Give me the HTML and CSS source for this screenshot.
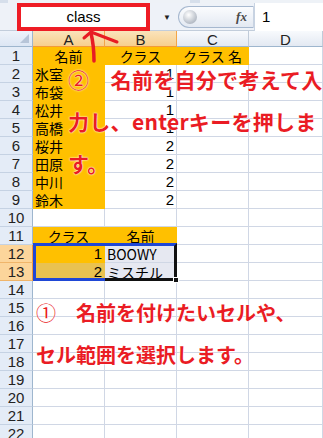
FILE: index.html
```html
<!DOCTYPE html>
<html lang="ja">
<head>
    <meta charset="UTF-8">
    <title>名前の定義</title>
    <link rel="stylesheet" href="styles.css">
</head>
<body>
    <div class="window">
        <div class="ribbon-edge"></div>

        <div class="formula-bar">
            <div class="name-box">class</div>
            <span class="drop">&#9660;</span>
            <div class="fx-pill"><span class="knob"></span><span class="fx">fx</span></div>
            <div class="formula">1</div>
        </div>

        <div class="sheet">
            <div class="corner"></div>
            <div class="col-head on">A</div>
            <div class="col-head on">B</div>
            <div class="col-head">C</div>
            <div class="col-head">D</div>

            <div class="row-head">1</div>
            <div class="cell fill center">名前</div>
            <div class="cell fill center">クラス</div>
            <div class="cell fill center">クラス 名</div>
            <div class="cell"></div>

            <div class="row-head">2</div>
            <div class="cell fill">氷室</div>
            <div class="cell num">1</div>
            <div class="cell"></div>
            <div class="cell"></div>

            <div class="row-head">3</div>
            <div class="cell fill">布袋</div>
            <div class="cell num">1</div>
            <div class="cell"></div>
            <div class="cell"></div>

            <div class="row-head">4</div>
            <div class="cell fill">松井</div>
            <div class="cell num">1</div>
            <div class="cell"></div>
            <div class="cell"></div>

            <div class="row-head">5</div>
            <div class="cell fill">高橋</div>
            <div class="cell num">1</div>
            <div class="cell"></div>
            <div class="cell"></div>

            <div class="row-head">6</div>
            <div class="cell fill">桜井</div>
            <div class="cell num">2</div>
            <div class="cell"></div>
            <div class="cell"></div>

            <div class="row-head">7</div>
            <div class="cell fill">田原</div>
            <div class="cell num">2</div>
            <div class="cell"></div>
            <div class="cell"></div>

            <div class="row-head">8</div>
            <div class="cell fill">中川</div>
            <div class="cell num">2</div>
            <div class="cell"></div>
            <div class="cell"></div>

            <div class="row-head">9</div>
            <div class="cell fill">鈴木</div>
            <div class="cell num">2</div>
            <div class="cell"></div>
            <div class="cell"></div>

            <div class="row-head">10</div>
            <div class="cell"></div><div class="cell"></div><div class="cell"></div><div class="cell"></div>

            <div class="row-head">11</div>
            <div class="cell fill center">クラス</div>
            <div class="cell fill center">名前</div>
            <div class="cell"></div>
            <div class="cell"></div>

            <div class="row-head on">12</div>
            <div class="cell fill num">1</div>
            <div class="cell picked">BOOWY</div>
            <div class="cell"></div>
            <div class="cell"></div>

            <div class="row-head on">13</div>
            <div class="cell fill dim num">2</div>
            <div class="cell picked">ミスチル</div>
            <div class="cell"></div>
            <div class="cell"></div>

            <div class="row-head">14</div>
            <div class="cell"></div><div class="cell"></div><div class="cell"></div><div class="cell"></div>
            <div class="row-head">15</div>
            <div class="cell"></div><div class="cell"></div><div class="cell"></div><div class="cell"></div>
            <div class="row-head">16</div>
            <div class="cell"></div><div class="cell"></div><div class="cell"></div><div class="cell"></div>
            <div class="row-head">17</div>
            <div class="cell"></div><div class="cell"></div><div class="cell"></div><div class="cell"></div>
            <div class="row-head">18</div>
            <div class="cell"></div><div class="cell"></div><div class="cell"></div><div class="cell"></div>
            <div class="row-head">19</div>
            <div class="cell"></div><div class="cell"></div><div class="cell"></div><div class="cell"></div>
            <div class="row-head">20</div>
            <div class="cell"></div><div class="cell"></div><div class="cell"></div><div class="cell"></div>
            <div class="row-head">21</div>
            <div class="cell"></div><div class="cell"></div><div class="cell"></div><div class="cell"></div>
            <div class="row-head">22</div>
            <div class="cell"></div><div class="cell"></div><div class="cell"></div><div class="cell"></div>

            <!-- selection of A12:B13 -->
            <div class="sel-a"></div>
            <div class="sel-b"><span class="handle"></span></div>
        </div>

        <!-- annotations pasted over the sheet -->
        <div class="mark-box"></div>
        <svg class="arrow" width="40" height="40" viewBox="80 28 40 40">
            <path d="M84 38 L91 32 L117 42" fill="none" stroke="#e81c24" stroke-width="3" stroke-linecap="round" stroke-linejoin="round"/>
            <path d="M91 33 Q94 46 94 61" fill="none" stroke="#e81c24" stroke-width="3.5" stroke-linecap="round"/>
        </svg>

        <div class="note note-top">
            <p><span class="circ">②</span>　名前を自分で考えて入</p>
            <p>力し、enterキーを押しま</p>
            <p>す。</p>
        </div>

        <div class="note note-bottom">
            <p><span class="circ">①</span>　名前を付けたいセルや、</p>
            <p>セル範囲を選択します。</p>
        </div>
    </div>
</body>
</html>
```

FILE: styles.css
```css
/* --- BASE ---------------------------------------------- */
* { box-sizing: border-box; margin: 0; padding: 0; }
body {
    background: #fff;
    font-family: "Liberation Sans", "Noto Sans CJK JP", sans-serif;
    color: #000;
    overflow: hidden;
}

.window {
    position: relative;
    width: 323px;
    height: 438px;
    overflow: hidden;
}

/* --- TOP STRIP + FORMULA BAR --------------------------- */
.ribbon-edge {
    height: 3px;
    background: linear-gradient(90deg, #d6dfeb 0 8px, #eef2f7 8px 190px, #d6dfeb 190px 200px, #eef2f7 200px);
}

.formula-bar {
    height: 28px;
    display: flex;
    align-items: center;
    background: #eef2f8;
    border-bottom: 1px solid #c2cddb;
}
.name-box {
    width: 133px;
    height: 28px;
    margin-left: 17px;
    background: #fff;
    border: 4px solid #ee1c25;
    font-size: 15px;
    line-height: 20px;
    text-align: center;
}
.drop {
    font-size: 8px;
    color: #222;
    margin: 1px 7px 0 13px;
}
.fx-pill {
    position: relative;
    width: 76px;
    height: 22px;
    border: 1px solid #a6b8cf;
    border-right-color: #c8d3e2;
    border-radius: 11px 0 0 11px;
    background: linear-gradient(#fbfcfe, #e3e9f2);
}
.knob {
    position: absolute;
    left: 4px;
    top: 3px;
    width: 14px;
    height: 14px;
    border-radius: 50%;
    background: radial-gradient(circle at 40% 35%, #fff, #b5bcc6 70%);
}
.fx {
    position: absolute;
    right: 6px;
    top: 2px;
    font-family: "Liberation Serif", serif;
    font-style: italic;
    font-weight: bold;
    font-size: 13px;
    color: #4a4a4a;
}
.formula {
    flex: 1;
    height: 28px;
    background: #fff;
    border-left: 1px solid #c8d3e2;
    padding-left: 7px;
    font-size: 15px;
    line-height: 28px;
}

/* --- SHEET GRID ---------------------------------------- */
.sheet {
    position: relative;
    display: grid;
    grid-template-columns: 33px 72px 72px 72px 74px;
    grid-template-rows: 16px;
    grid-auto-rows: 18px;
    font-family: "Noto Sans CJK JP", "Liberation Sans", sans-serif;
    font-size: 14px;
}

.corner {
    position: relative;
    background: linear-gradient(#eef3fa, #dce6f4);
    border-right: 1px solid #9eb6ce;
    border-bottom: 1px solid #9eb6ce;
}
.corner::after {
    content: "";
    position: absolute;
    right: 3px;
    bottom: 3px;
    border-left: 9px solid transparent;
    border-bottom: 9px solid #b7c5d8;
}

.col-head {
    background: linear-gradient(#f8fafd, #e3e9f2);
    border-right: 1px solid #c0cbd9;
    border-bottom: 1px solid #9eb6ce;
    text-align: center;
    font-family: "Liberation Sans", sans-serif;
    font-size: 15px;
    line-height: 17px;
    color: #222;
}
.col-head.on {
    background: linear-gradient(#fae3bb, #f7cf8d);
    border-right-color: #f2a548;
    border-bottom: 1px solid #f29a3a;
}

.row-head {
    background: #e4ecf7;
    border-right: 1px solid #9eb6ce;
    border-bottom: 1px solid #c5d2e3;
    text-align: center;
    font-family: "Liberation Sans", sans-serif;
    font-size: 15px;
    line-height: 18px;
    color: #222;
}
.row-head.on {
    background: #fcd59b;
    border-right-color: #f29a3a;
    border-bottom-color: #f0b56a;
}

.cell {
    border-right: 1px solid #d0d7e5;
    border-bottom: 1px solid #d0d7e5;
    padding: 0 2px;
    line-height: 18px;
    white-space: nowrap;
    overflow: hidden;
}
.cell.fill { background: #ffc000; border-color: #ffc000; }
.cell.fill.dim { background: #e9c250; border-color: #e9c250; }
.cell.picked { background: #e6e8f1; }
.cell.center { text-align: center; }
.cell.num { text-align: right; font-family: "Liberation Sans", sans-serif; font-size: 15px; }

/* selection outline */
.sel-a {
    position: absolute;
    left: 33px;
    top: 212px;
    width: 72px;
    height: 38px;
    border: 3px solid #1f47d6;
    border-right: none;
}
.sel-b {
    position: absolute;
    left: 105px;
    top: 212px;
    width: 72px;
    height: 38px;
    border-top: 3px solid #1f47d6;
    border-right: 3px solid #111;
    border-bottom: 3px solid #111;
}
.handle {
    position: absolute;
    right: -5px;
    bottom: -5px;
    width: 6px;
    height: 6px;
    background: #111;
    border: 1px solid #fff;
}

/* --- ANNOTATIONS --------------------------------------- */
.mark-box {
    display: none;
}
.arrow {
    position: absolute;
    left: 80px;
    top: 28px;
}

.note {
    position: absolute;
    color: #ea1c24;
    font-family: "Noto Sans CJK JP", sans-serif;
    font-weight: bold;
    white-space: nowrap;
    text-shadow: 0 0 1px #fff, 0 0 2px #fff;
}
.note p { height: 42px; line-height: 42px; }
.circ { font-weight: normal; }

.note-top {
    left: 68px;
    top: 58px;
    font-size: 21px;
    letter-spacing: 0.3px;
}
.note-bottom {
    left: 36px;
    top: 292px;
    font-size: 20px;
}
```
